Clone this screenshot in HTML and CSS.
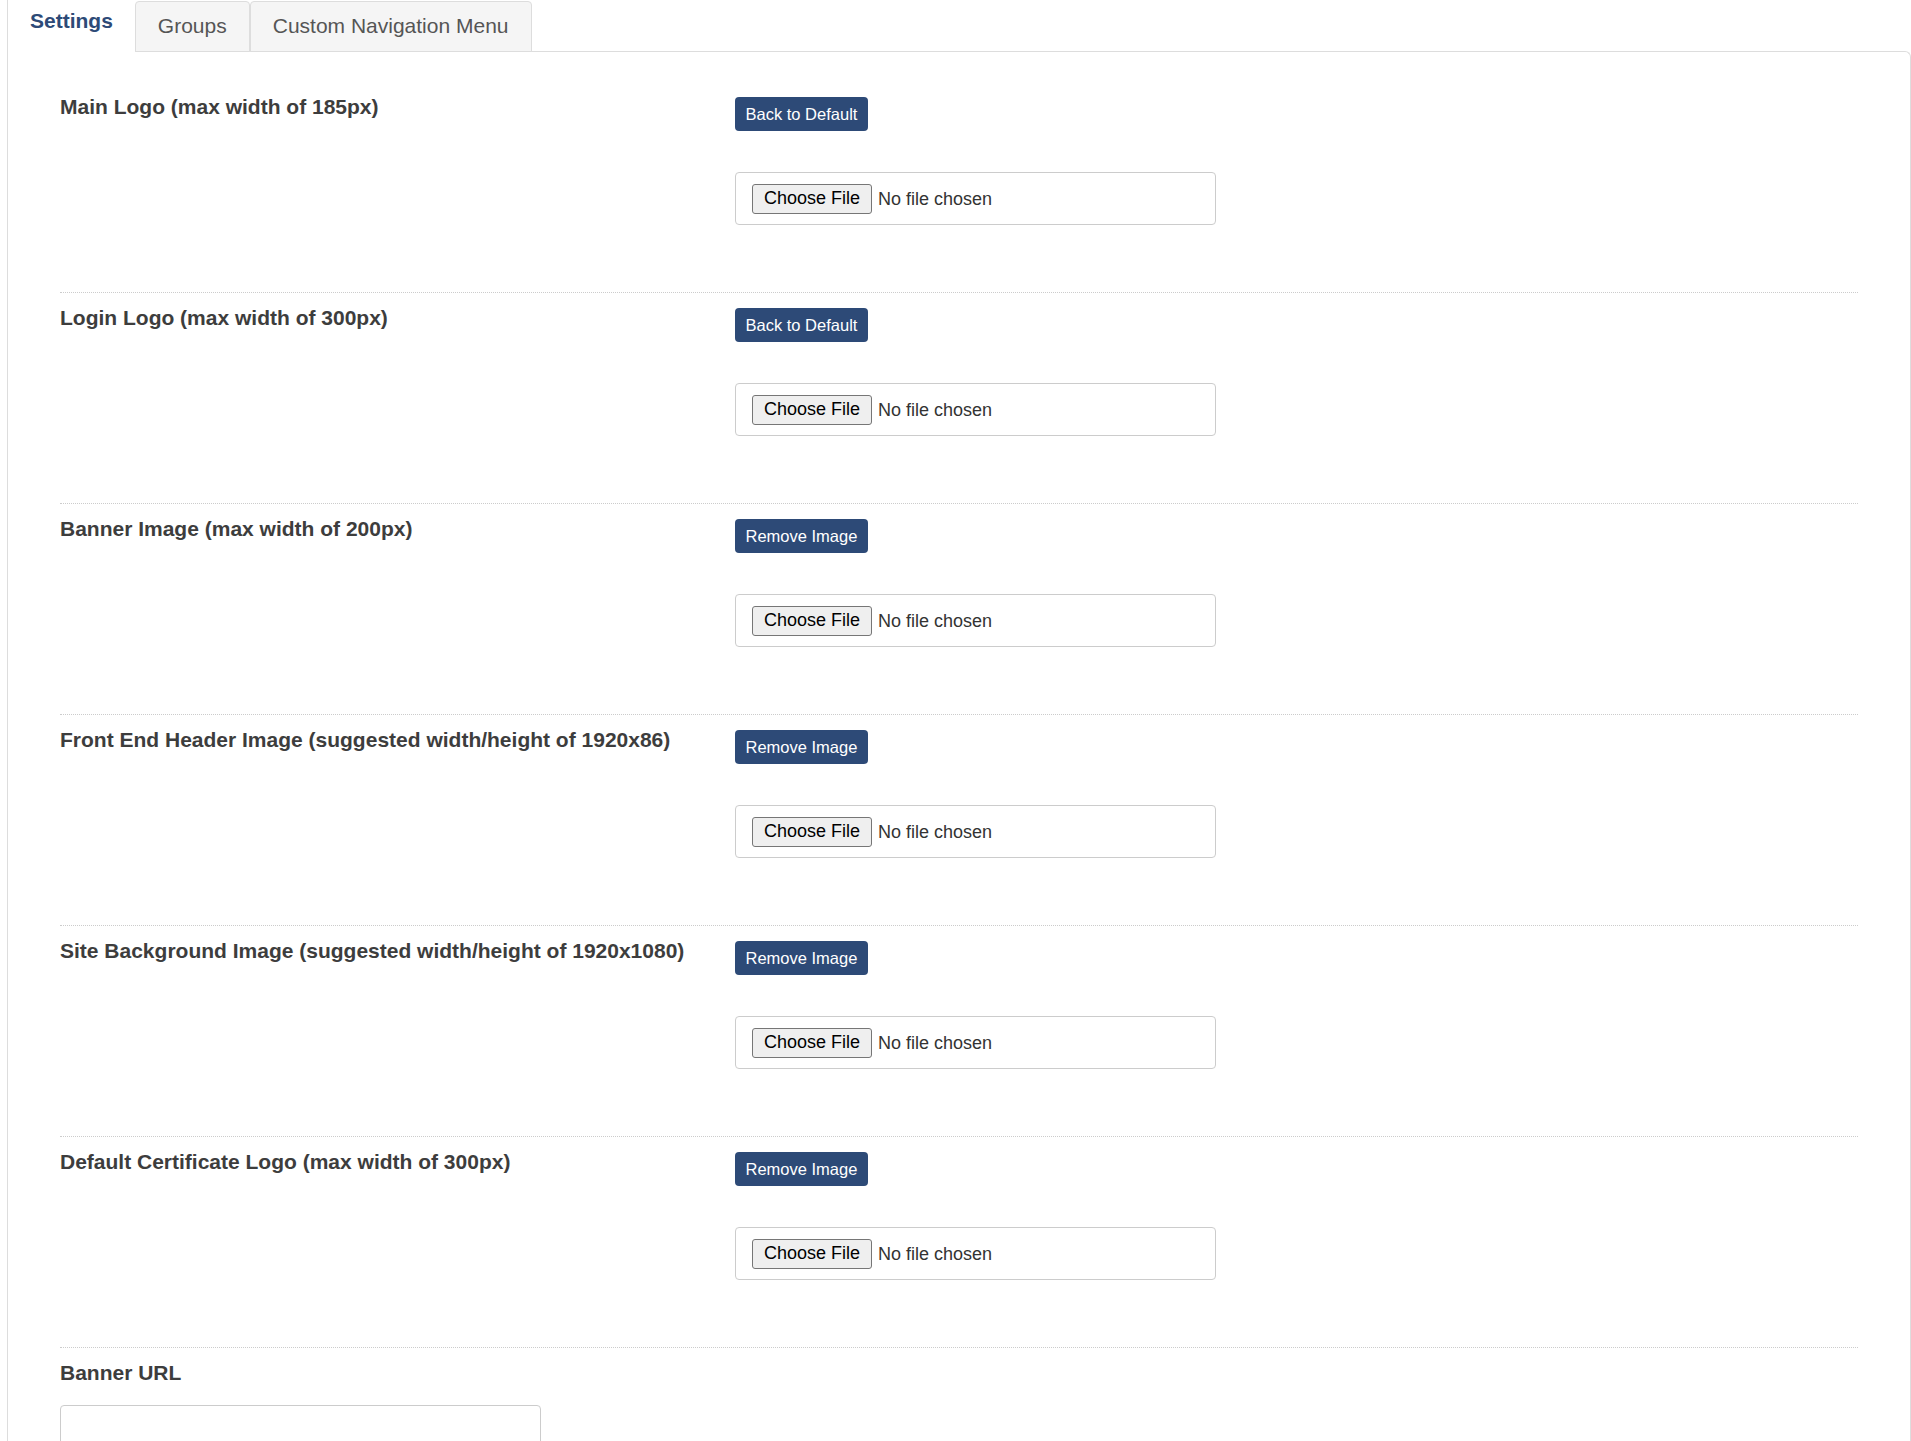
FILE: index.html
```html
<!DOCTYPE html>
<html lang="en">
<head>
<meta charset="utf-8">
<title>Settings</title>
<link rel="stylesheet" href="styles.css">
</head>
<body>
<div class="page">
  <nav class="tabs">
    <a class="tab active">Settings</a>
    <a class="tab">Groups</a>
    <a class="tab">Custom Navigation Menu</a>
  </nav>
  <div class="panel">
    <form class="form">
      <div class="row">
        <div class="label">Main Logo (max width of 185px)</div>
        <div class="controls">
          <button type="button" class="btn">Back to Default</button>
          <div class="file"><span class="choose">Choose File</span><span class="status">No file chosen</span></div>
        </div>
      </div>
      <div class="row">
        <div class="label">Login Logo (max width of 300px)</div>
        <div class="controls">
          <button type="button" class="btn">Back to Default</button>
          <div class="file"><span class="choose">Choose File</span><span class="status">No file chosen</span></div>
        </div>
      </div>
      <div class="row">
        <div class="label">Banner Image (max width of 200px)</div>
        <div class="controls">
          <button type="button" class="btn">Remove Image</button>
          <div class="file"><span class="choose">Choose File</span><span class="status">No file chosen</span></div>
        </div>
      </div>
      <div class="row">
        <div class="label">Front End Header Image (suggested width/height of 1920x86)</div>
        <div class="controls">
          <button type="button" class="btn">Remove Image</button>
          <div class="file"><span class="choose">Choose File</span><span class="status">No file chosen</span></div>
        </div>
      </div>
      <div class="row">
        <div class="label">Site Background Image (suggested width/height of 1920x1080)</div>
        <div class="controls">
          <button type="button" class="btn">Remove Image</button>
          <div class="file"><span class="choose">Choose File</span><span class="status">No file chosen</span></div>
        </div>
      </div>
      <div class="row">
        <div class="label">Default Certificate Logo (max width of 300px)</div>
        <div class="controls">
          <button type="button" class="btn">Remove Image</button>
          <div class="file"><span class="choose">Choose File</span><span class="status">No file chosen</span></div>
        </div>
      </div>
      <div class="row-last">
        <div class="label">Banner URL</div>
        <input class="text-input" type="text">
      </div>
    </form>
  </div>
</div>
</body>
</html>
```

FILE: styles.css
```css
html, body {
  margin: 0;
  padding: 0;
  background: #ffffff;
}

body {
  font-family: "Liberation Sans", Arial, Helvetica, sans-serif;
  color: #333333;
}

.page {
  margin-left: 7px;
  border-left: 1px solid #dddddd;
  min-height: 100vh;
}

.tabs {
  display: flex;
  align-items: flex-end;
  margin-bottom: -1px;
  position: relative;
  z-index: 1;
}

.tab {
  display: block;
  font-size: 21px;
  line-height: 30px;
  white-space: nowrap;
  cursor: pointer;
  box-sizing: border-box;
}

.tab:not(.active) {
  height: 51px;
  padding: 9px 22px 10px;
  background: #f5f5f5;
  border: 1px solid #dddddd;
  border-radius: 4px 4px 0 0;
  color: #555555;
}

.tab.active {
  height: 52px;
  padding: 6px 22px 16px;
  background: #ffffff;
  color: #2d4a77;
  font-weight: bold;
}

.panel {
  border-top: 1px solid #dddddd;
  border-right: 1px solid #dddddd;
  border-top-right-radius: 6px;
}

.form {
  margin: 0;
  padding: 30px 52px 0;
}

.row {
  display: grid;
  grid-template-columns: 675px 1fr;
  padding: 9px 0 67px;
  border-bottom: 1px dotted #cccccc;
}

.label {
  padding-top: 1px;
  font-size: 21px;
  line-height: 30px;
  font-weight: bold;
  color: #3d3d3d;
}

.controls {
  display: flex;
  flex-direction: column;
  align-items: flex-start;
  gap: 41px;
  padding-top: 6px;
}

.btn {
  height: 34px;
  box-sizing: border-box;
  padding: 1px 10.5px 0;
  border: 0;
  border-radius: 4px;
  background: #2d4a77;
  color: #ffffff;
  font-family: "Liberation Sans", Arial, Helvetica, sans-serif;
  font-size: 16.5px;
  line-height: 33px;
  cursor: pointer;
}

.file {
  display: flex;
  align-items: center;
  width: 481px;
  height: 53px;
  box-sizing: border-box;
  padding: 0 16px;
  border: 1px solid #cccccc;
  border-radius: 4px;
  background: #ffffff;
}

.choose {
  display: block;
  height: 30px;
  box-sizing: border-box;
  padding: 0 11px 1px;
  border: 1px solid #767676;
  border-radius: 3px;
  background: #efefef;
  color: #000000;
  font-size: 18px;
  line-height: 27px;
}

.status {
  margin-left: 6px;
  margin-top: 2px;
  font-size: 18px;
  color: #333333;
}

.row-last {
  padding-top: 9px;
}

.text-input {
  display: block;
  margin-top: 17px;
  width: 481px;
  height: 53px;
  box-sizing: border-box;
  border: 1px solid #cccccc;
  border-radius: 4px;
  background: #ffffff;
  font-family: "Liberation Sans", Arial, Helvetica, sans-serif;
  font-size: 18px;
  padding: 0 12px;
}
```
